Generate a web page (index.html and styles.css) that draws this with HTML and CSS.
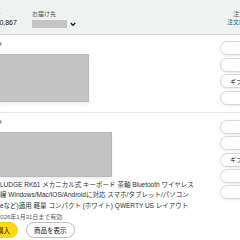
FILE: index.html
```html
<!DOCTYPE html>
<html lang="ja">
  <head>
    <meta charset="UTF-8" />
    <meta name="viewport" content="width=device-width, initial-scale=1.0" />
    <title>注文履歴</title>
    <link rel="stylesheet" href="styles.css">
  </head>
  <body>
    <div class="order">
      <div class="order-head">
        <div class="col-total">
          <p class="label">合計</p>
          <p class="value">￥10,867</p>
        </div>
        <div class="col-ship">
          <p class="label">お届け先</p>
          <div class="ship-to">
            <span class="redact"></span>
            <svg class="chev" width="6" height="5" viewBox="0 0 6 5">
              <polyline points="0.8,1 3,3.4 5.2,1" fill="none" stroke="#0f1111" stroke-width="1.3" />
            </svg>
          </div>
        </div>
        <div class="col-id">
          <p class="label id-label">注文番号 250-0000000-0000000</p>
          <p class="link">注文内容を表示 | 領収書等</p>
        </div>
      </div>

      <div class="shipment">
        <div class="main">
          <p class="status">配達済み</p>
          <div class="redact-box box-a"></div>
        </div>
        <div class="actions">
          <button class="btn">配送状況を確認</button>
          <button class="btn">返品・交換をする</button>
          <button class="btn">ギフトレシートを共有する</button>
          <button class="btn">レビューを書く</button>
        </div>
      </div>

      <div class="shipment">
        <div class="main">
          <p class="status">配達済み</p>
          <div class="redact-box box-b"></div>
          <div class="title">
            <p>LUDGE RK61 メカニカル式 キーボード 茶軸 Bluetooth ワイヤレス</p>
            <p>線 Windows/Mac/IOS/Androidに対応 スマホ/タブレット/パソコン</p>
            <p>eなど)適用 軽量 コンパクト (ホワイト) QWERTY US レイアウト</p>
          </div>
          <p class="valid">2026年1月31日まで有効</p>
          <div class="row-btns">
            <button class="pill buy">再度購入</button>
            <button class="pill">商品を表示</button>
          </div>
        </div>
        <div class="actions actions-b">
          <button class="btn">配送状況を確認</button>
          <button class="btn">返品・交換</button>
          <button class="btn">ギフトレシートを共有する</button>
          <button class="btn">出品者に連絡</button>
          <button class="btn">レビューを書く</button>
        </div>
      </div>
    </div>
  </body>
</html>
```

FILE: styles.css
```css
* {
  margin: 0;
  padding: 0;
  box-sizing: border-box;
}
body {
  width: 240px;
  height: 240px;
  overflow: hidden;
  background-color: #fff;
  color: #0f1111;
  font-family: "Liberation Sans", "Noto Sans CJK JP", sans-serif;
}
.order {
  width: 340px;
}
.order-head {
  height: 35px;
  display: flex;
  padding-top: 10px;
  background-color: #f0f2f2;
  border-bottom: 1px solid #d5d9d9;
}
.label {
  font-size: 6px;
  line-height: 8px;
  color: #565959;
  white-space: nowrap;
}
.value {
  font-size: 7px;
  line-height: 9px;
  white-space: nowrap;
}
.col-total {
  margin-left: -11.5px;
  width: 43.5px;
}
.col-ship {
  width: 195px;
}
.ship-to {
  display: flex;
  align-items: center;
  gap: 3px;
  margin-top: 2px;
}
.redact {
  width: 35px;
  height: 8px;
  background-color: #c4c4c4;
}
.col-id {
  white-space: nowrap;
}
.id-label {
  padding-left: 6px;
}
.link {
  font-size: 6px;
  line-height: 9px;
  color: #007185;
}
.shipment {
  display: flex;
  border-bottom: 1px solid #e7e7e7;
}
.main {
  width: 220px;
  padding-top: 5px;
  padding-bottom: 10px;
}
.status {
  height: 8px;
  font-size: 7px;
  line-height: 8px;
  font-weight: bold;
  color: #8a8f8f;
  margin-left: -26px;
  white-space: nowrap;
}
.redact-box {
  margin-top: 6px;
  margin-left: -1px;
  background-color: #c3c3c3;
  border: 1px solid #b9b9b9;
  box-shadow: 0 2px 4px rgba(0, 0, 0, 0.08);
}
.box-a {
  width: 90px;
  height: 48px;
}
.box-b {
  width: 113px;
  height: 45px;
}
.title {
  margin-top: 3px;
  font-size: 6.5px;
  line-height: 10.3px;
  color: #26313a;
  white-space: nowrap;
}
.valid {
  margin-top: 2px;
  margin-left: -3px;
  font-size: 6px;
  line-height: 8px;
  color: #565959;
  white-space: nowrap;
}
.row-btns {
  display: flex;
  gap: 8px;
  margin-top: 1px;
  margin-left: -24px;
}
.pill {
  height: 16px;
  padding: 0 7px;
  border-radius: 8px;
  border: 1px solid #bbbfbf;
  background-color: #fff;
  font-family: inherit;
  font-size: 6.5px;
  color: #0f1111;
  white-space: nowrap;
}
.buy {
  background-color: #ffd814;
  border-color: #fcd200;
}
.actions {
  display: flex;
  flex-direction: column;
  gap: 2.5px;
  padding-top: 6px;
}
.actions-b {
  padding-top: 7px;
  gap: 2.3px;
}
.btn {
  width: 92px;
  height: 14px;
  border-radius: 7px;
  border: 1px solid #d5d9d9;
  background-color: #fff;
  box-shadow: 0 1px 2px rgba(213, 217, 217, 0.5);
  font-family: inherit;
  font-size: 6px;
  color: #0f1111;
  white-space: nowrap;
}
```
